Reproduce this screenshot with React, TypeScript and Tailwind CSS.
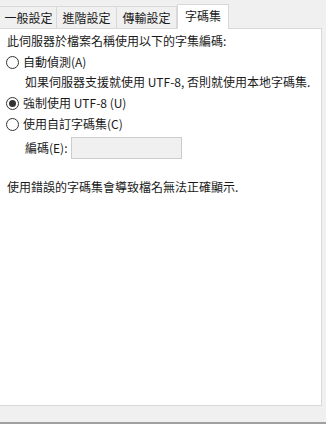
export default function App() {
  const tabs = ["一般設定", "進階設定", "傳輸設定"];

  const Radio = ({ checked }: { checked?: boolean }) => (
    <span className="flex h-[13px] w-[13px] shrink-0 items-center justify-center rounded-full border border-[#333] bg-white">
      {checked && <span className="h-[7px] w-[7px] rounded-full bg-[#333]" />}
    </span>
  );

  return (
    <div
      className="flex h-[424px] w-[326px] flex-col bg-[#f0f0f0] text-[12px] text-[#1a1a1a]"
      style={{ fontFamily: '"Noto Sans CJK TC", sans-serif' }}
    >
      {/* tab strip */}
      <div className="flex h-[28px] items-end">
        {tabs.map((t, i) => (
          <div
            key={t}
            className={
              "flex h-[22px] items-center justify-center border-t border-r border-[#d9d9d9] bg-[#f0f0f0] " +
              (i === 0 ? "w-[57px] pl-[1px]" : "w-[60px]")
            }
          >
            {t}
          </div>
        ))}
        <div className="relative -mb-px flex h-[25px] w-[52px] items-start justify-center border-x border-t border-[#d9d9d9] bg-white pt-[2px]">
          字碼集
        </div>
      </div>

      {/* page */}
      <div className="h-[378px] w-[322px] border-r border-b border-t border-[#d9d9d9] bg-white pl-[7px] pt-[3px]">
        <div className="flex h-[18px] items-center">此伺服器於檔案名稱使用以下的字集編碼:</div>

        <div className="mt-[3px] flex h-[18px] items-center gap-[4px] -ml-[1px]">
          <Radio />
          <span>自動偵測(A)</span>
        </div>
        <div className="mt-[2px] flex h-[18px] items-center pl-[18px]">
          如果伺服器支援就使用 UTF-8, 否則就使用本地字碼集.
        </div>

        <div className="mt-[3px] flex h-[18px] items-center gap-[4px] -ml-[1px]">
          <Radio checked />
          <span>強制使用 UTF-8 (U)</span>
        </div>
        <div className="mt-[3px] flex h-[18px] items-center gap-[4px] -ml-[1px]">
          <Radio />
          <span>使用自訂字碼集(C)</span>
        </div>

        <div className="mt-[4px] flex items-center gap-[3px] pl-[18px]">
          <span>編碼(E):</span>
          <div className="h-[22px] w-[111px] border border-[#cccccc] bg-[#f0f0f0]" />
        </div>

        <div className="mt-[19px] flex h-[18px] items-center">使用錯誤的字碼集會導致檔名無法正確顯示.</div>
      </div>

      <div className="flex-1" />
      <div className="h-[2px] bg-[#a0a0a0]" />
    </div>
  );
}
